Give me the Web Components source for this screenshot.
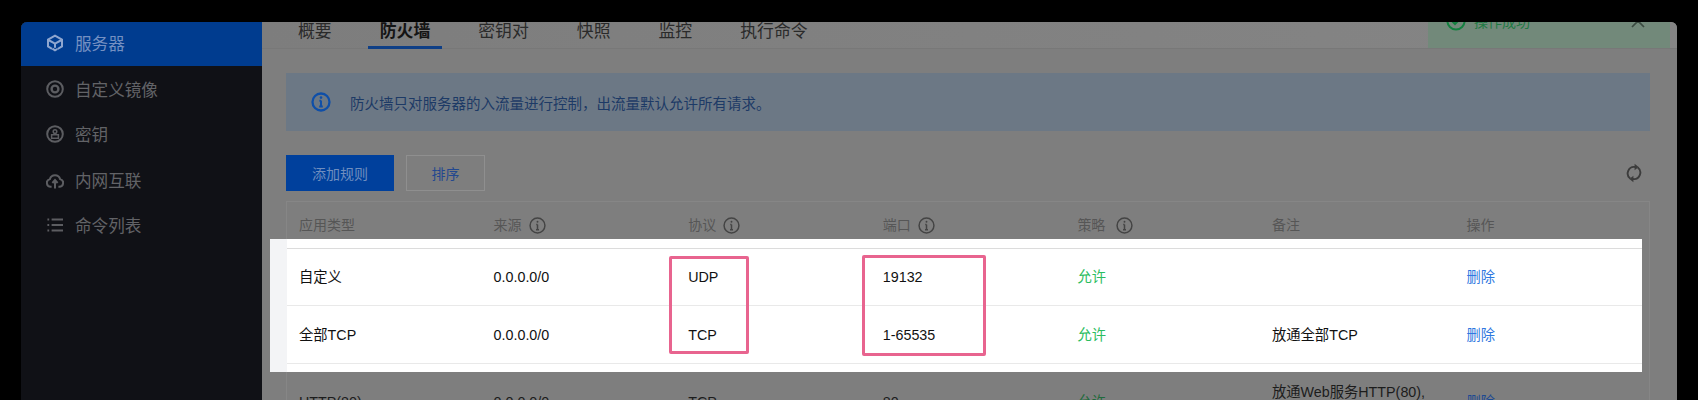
<!DOCTYPE html>
<html lang="zh">
<head>
<meta charset="utf-8">
<title>防火墙</title>
<style>
html, body { margin: 0; height: 400px; overflow: hidden; background: #000; }
body { font-family: "Liberation Sans", "Noto Sans CJK SC", sans-serif; }
</style>
</head>
<body>
<app-window>
  <side-nav slot="side">
    <nav-item icon="server" active>服务器</nav-item>
    <nav-item icon="image">自定义镜像</nav-item>
    <nav-item icon="key">密钥</nav-item>
    <nav-item icon="cloud">内网互联</nav-item>
    <nav-item icon="list">命令列表</nav-item>
  </side-nav>
  <tab-bar>
    <tab-item>概要</tab-item>
    <tab-item active>防火墙</tab-item>
    <tab-item>密钥对</tab-item>
    <tab-item>快照</tab-item>
    <tab-item>监控</tab-item>
    <tab-item>执行命令</tab-item>
  </tab-bar>
  <info-alert>防火墙只对服务器的入流量进行控制，出流量默认允许所有请求。</info-alert>
  <rule-toolbar>
    <ui-button primary>添加规则</ui-button>
    <ui-button>排序</ui-button>
  </rule-toolbar>
  <rule-table>
    <rule-row slot="head" kind="head">
      <span>应用类型</span>
      <span>来源<hint-icon></hint-icon></span>
      <span>协议<hint-icon></hint-icon></span>
      <span>端口<hint-icon></hint-icon></span>
      <span>策略<hint-icon wide></hint-icon></span>
      <span>备注</span>
      <span>操作</span>
    </rule-row>
    <rule-spotlight slot="spot">
      <rule-row>
        <span>自定义</span><span>0.0.0.0/0</span><span>UDP</span><span>19132</span>
        <span data-tone="ok">允许</span><span></span><span data-tone="link">删除</span>
      </rule-row>
      <rule-row>
        <span>全部TCP</span><span>0.0.0.0/0</span><span>TCP</span><span>1-65535</span>
        <span data-tone="ok">允许</span><span>放通全部TCP</span><span data-tone="link">删除</span>
      </rule-row>
      <mark-box slot="marks" style="left:399px;top:17px;width:80px;height:98px"></mark-box>
      <mark-box slot="marks" style="left:592px;top:16px;width:124px;height:101px"></mark-box>
    </rule-spotlight>
    <rule-row kind="dim">
      <span>HTTP(80)</span><span>0.0.0.0/0</span><span>TCP</span><span>80</span>
      <span data-tone="ok">允许</span><span>放通Web服务HTTP(80),<br>如Apache、Nginx</span><span data-tone="link">删除</span>
    </rule-row>
  </rule-table>
  <success-toast slot="toast">操作成功</success-toast>
</app-window>

<script>
const ICONS = {
  server: '<path d="M6 14.8 2 12.4V5.6L9 1.6l7 4v6.8l-4.4 2.6"/><path d="M2.4 6 9 9.6 15.6 6M9 9.6v4.2M6.4 14.6 9 16.4l2.4-1.4"/>',
  image: '<circle cx="9" cy="9" r="7.8"/><circle cx="9" cy="9" r="3.4" stroke-width="2.4"/>',
  key: '<circle cx="9" cy="9" r="7.8"/><circle cx="9" cy="6.6" r="1.8" stroke-width="1.5"/><path d="M5.6 13.2h6.8v-3.4H5.6z" stroke-width="1.5"/>',
  cloud: '<path d="M5.6 15.8H4.8a3.9 3.9 0 0 1-.9-7.7 5.3 5.3 0 0 1 10.2 0 3.9 3.9 0 0 1-.9 7.7h-.8"/><path d="M9 9v8.4M6.4 12 9 9l2.6 3"/>',
  list: '<path d="M5.6 3.5H17M5.6 9H17M5.6 14.5H17"/><path d="M1.4 3.5h1.8M1.4 9h1.8M1.4 14.5h1.8" stroke-width="2"/>'
};

class AppWindow extends HTMLElement {
  constructor() {
    super();
    this.attachShadow({ mode: 'open' }).innerHTML = `<style>
      :host { display: block; margin: 22px 21px 0; height: 378px; }
      .win { position: relative; display: flex; height: 100%; overflow: hidden; border-radius: 6px 6px 0 0; background: #7e7e7e; }
      main { flex: 1; min-width: 0; display: flex; flex-direction: column; }
      .body { display: flex; flex-direction: column; padding: 24px 27px 0 24px; }
    </style>
    <div class="win">
      <slot name="side"></slot>
      <main>
        <slot class="tabs" name="tabs"></slot>
        <div class="body"><slot></slot></div>
      </main>
      <slot name="toast"></slot>
    </div>`;
  }
  connectedCallback() {
    // the tab bar sits above the padded body
    const bar = this.querySelector('tab-bar');
    if (bar) bar.slot = 'tabs';
  }
}

class SideNav extends HTMLElement {
  constructor() {
    super();
    this.attachShadow({ mode: 'open' }).innerHTML = `<style>
      :host { display: block; flex: 0 0 241px; box-sizing: border-box; background: #101116; overflow: hidden; }
      div { display: flex; flex-direction: column; margin-top: -1.5px; }
    </style><div><slot></slot></div>`;
  }
}

class NavItem extends HTMLElement {
  constructor() {
    super();
    this.attachShadow({ mode: 'open' });
  }
  connectedCallback() {
    const icon = ICONS[this.getAttribute('icon')] || '';
    this.shadowRoot.innerHTML = `<style>
      :host { display: flex; align-items: center; gap: 11px; height: 45.5px; padding-left: 25px; font-size: 16.6px; color: #626367; }
      :host([active]) { background: #003c8f; color: #7490c2; }
      svg { width: 18px; height: 18px; fill: none; stroke: #5c5d61; stroke-width: 2; }
      :host([active]) svg { stroke: #8ea6cf; stroke-width: 2; }
    </style><svg viewBox="0 0 18 18">${icon}</svg><slot></slot>`;
  }
}

class TabBar extends HTMLElement {
  constructor() {
    super();
    this.attachShadow({ mode: 'open' }).innerHTML = `<style>
      :host { display: flex; gap: 24px; height: 26px; padding: 0 0 0 24px; background: linear-gradient(90deg, #7d7d7d, #858585); border-bottom: 1px solid #787878; }
    </style><slot></slot>`;
  }
}

class TabItem extends HTMLElement {
  constructor() {
    super();
    this.attachShadow({ mode: 'open' }).innerHTML = `<style>
      :host { display: block; padding: 0 12px; height: 27px; box-sizing: border-box; font-size: 16.85px; line-height: 20px; color: #2a2a2a; }
      :host([active]) { color: #141414; font-weight: 700; border-bottom: 3px solid #0f3f86; }
    </style><slot></slot>`;
  }
}

class InfoAlert extends HTMLElement {
  constructor() {
    super();
    this.attachShadow({ mode: 'open' }).innerHTML = `<style>
      :host { display: flex; align-items: center; gap: 19px; height: 58px; padding-left: 25px; background: #6c7885; font-size: 14.5px; color: #1d3a66; }
      svg { width: 20px; height: 20px; flex: none; }
    </style>
    <svg viewBox="0 0 20 20" fill="none" stroke="#0f4fa8"><circle cx="10" cy="10" r="8.5" stroke-width="2.3"/><path d="M10 8.6v6M8.4 8.8H10M8.2 14.6h3.6" stroke-width="2"/><circle cx="10" cy="5.6" r="1.3" fill="#0f4fa8" stroke="none"/></svg>
    <slot></slot>`;
  }
}

class RuleToolbar extends HTMLElement {
  constructor() {
    super();
    this.attachShadow({ mode: 'open' }).innerHTML = `<style>
      :host { display: flex; align-items: center; gap: 12px; margin-top: 24px; }
      svg { width: 16px; height: 20px; margin-left: auto; margin-right: 8px; fill: none; stroke: #3c3c3c; stroke-width: 1.9; }
      .tip { fill: #3c3c3c; stroke: none; }
    </style>
    <slot></slot>
    <svg viewBox="0 0 16 20"><path d="M4.2 15.4A6.4 6.4 0 0 1 9 4"/><path d="M11.8 4.6A6.4 6.4 0 0 1 7 16"/><path class="tip" d="M8.6.8 12.6 4 8.6 7.2zM7.4 12.8 3.4 16l4 3.2z"/></svg>`;
  }
}

class UiButton extends HTMLElement {
  constructor() {
    super();
    this.attachShadow({ mode: 'open' }).innerHTML = `<style>
      :host { display: flex; align-items: center; justify-content: center; box-sizing: border-box; height: 36px; width: 79px; border: 1px solid #8f8f8f; font-size: 14px; color: #23488f; }
      :host([primary]) { width: 108px; background: #00409c; border-color: #00409c; color: #6f8ebf; }
    </style><slot></slot>`;
  }
}

class RuleTable extends HTMLElement {
  constructor() {
    super();
    this.attachShadow({ mode: 'open' }).innerHTML = `<style>
      :host { display: block; margin-top: 10px; border: 1px solid #868686; border-bottom: 0; }
    </style>
    <slot name="head"></slot>
    <slot name="spot"></slot>
    <slot></slot>`;
  }
}

class RuleSpotlight extends HTMLElement {
  constructor() {
    super();
    this.attachShadow({ mode: 'open' }).innerHTML = `<style>
      :host { display: block; position: relative; margin: 0 7px 0 -17px; padding: 0 0 8px 17px; background: linear-gradient(90deg, #f3f4f6 17px, #fff 17px); }
      .rows { display: block; padding-top: 9px; }
      .rows ::slotted(rule-row:first-child) { border-top: 1px solid #dcdcdc; }
    </style>
    <div class="rows"><slot></slot></div>
    <slot name="marks"></slot>`;
  }
}

class RuleRow extends HTMLElement {
  constructor() {
    super();
    this.attachShadow({ mode: 'open' }).innerHTML = `<style>
      :host { display: grid; grid-template-columns: repeat(7, 194.6px); align-items: center; box-sizing: border-box; height: 58px; border-bottom: 1px solid #e9e9e9; font-size: 14.3px; line-height: 20px; color: #111; }
      :host([kind="head"]) { height: 37px; padding-top: 9px; border-bottom: 0; font-size: 14px; color: #565656; }
      :host([kind="dim"]) { height: 60px; border-bottom: 0; color: #1c1c1c; }
      ::slotted(span) { display: flex; flex-wrap: wrap; align-items: center; padding-left: 12px; white-space: nowrap; }
      ::slotted([data-tone="ok"]) { color: #2bbd60; }
      ::slotted([data-tone="link"]) { color: #2f78e0; }
      :host([kind="dim"]) ::slotted([data-tone="ok"]) { color: #1f6b3c; }
      :host([kind="dim"]) ::slotted([data-tone="link"]) { color: #1d4a92; }
    </style><slot></slot>`;
  }
}

class HintIcon extends HTMLElement {
  constructor() {
    super();
    this.attachShadow({ mode: 'open' }).innerHTML = `<style>
      :host { display: inline-flex; margin-left: 7px; }
      :host([wide]) { margin-left: 11px; }
      svg { width: 17px; height: 17px; }
    </style>
    <svg viewBox="0 0 16 16" fill="none" stroke="#444" stroke-width="1.4"><circle cx="8" cy="8" r="7"/><path d="M8 7v5M6.8 7.1H8M6.6 12h2.8"/><circle cx="8" cy="4.5" r=".9" fill="#444" stroke="none"/></svg>`;
  }
}

class MarkBox extends HTMLElement {
  constructor() {
    super();
    this.attachShadow({ mode: 'open' }).innerHTML = `<style>
      :host { position: absolute; box-sizing: border-box; border: 3.5px solid #e8648f; border-radius: 2px; }
    </style>`;
  }
}

class SuccessToast extends HTMLElement {
  constructor() {
    super();
    this.attachShadow({ mode: 'open' }).innerHTML = `<style>
      :host { position: absolute; top: -22px; left: 1407px; width: 242px; height: 48px; display: flex; align-items: center; box-sizing: border-box; padding: 0 0 6px 18px; background: #72897a; font-size: 14px; color: #1f7a44; }
      .ok { width: 20px; height: 20px; margin-right: 8px; }
      .close { width: 14px; height: 14px; margin-left: auto; margin-right: 25px; }
    </style>
    <svg class="ok" viewBox="0 0 20 20" fill="none" stroke="#13803f" stroke-width="2"><circle cx="10" cy="10" r="8.6"/><path d="M6 10l3 3 5-5"/></svg>
    <slot></slot>
    <svg class="close" viewBox="0 0 14 14" fill="none" stroke="#3a4a40" stroke-width="1.7"><path d="M1 1l12 12M13 1 1 13"/></svg>`;
  }
}

customElements.define('app-window', AppWindow);
customElements.define('side-nav', SideNav);
customElements.define('nav-item', NavItem);
customElements.define('tab-bar', TabBar);
customElements.define('tab-item', TabItem);
customElements.define('info-alert', InfoAlert);
customElements.define('rule-toolbar', RuleToolbar);
customElements.define('ui-button', UiButton);
customElements.define('rule-table', RuleTable);
customElements.define('rule-spotlight', RuleSpotlight);
customElements.define('rule-row', RuleRow);
customElements.define('hint-icon', HintIcon);
customElements.define('mark-box', MarkBox);
customElements.define('success-toast', SuccessToast);
</script>
</body>
</html>
